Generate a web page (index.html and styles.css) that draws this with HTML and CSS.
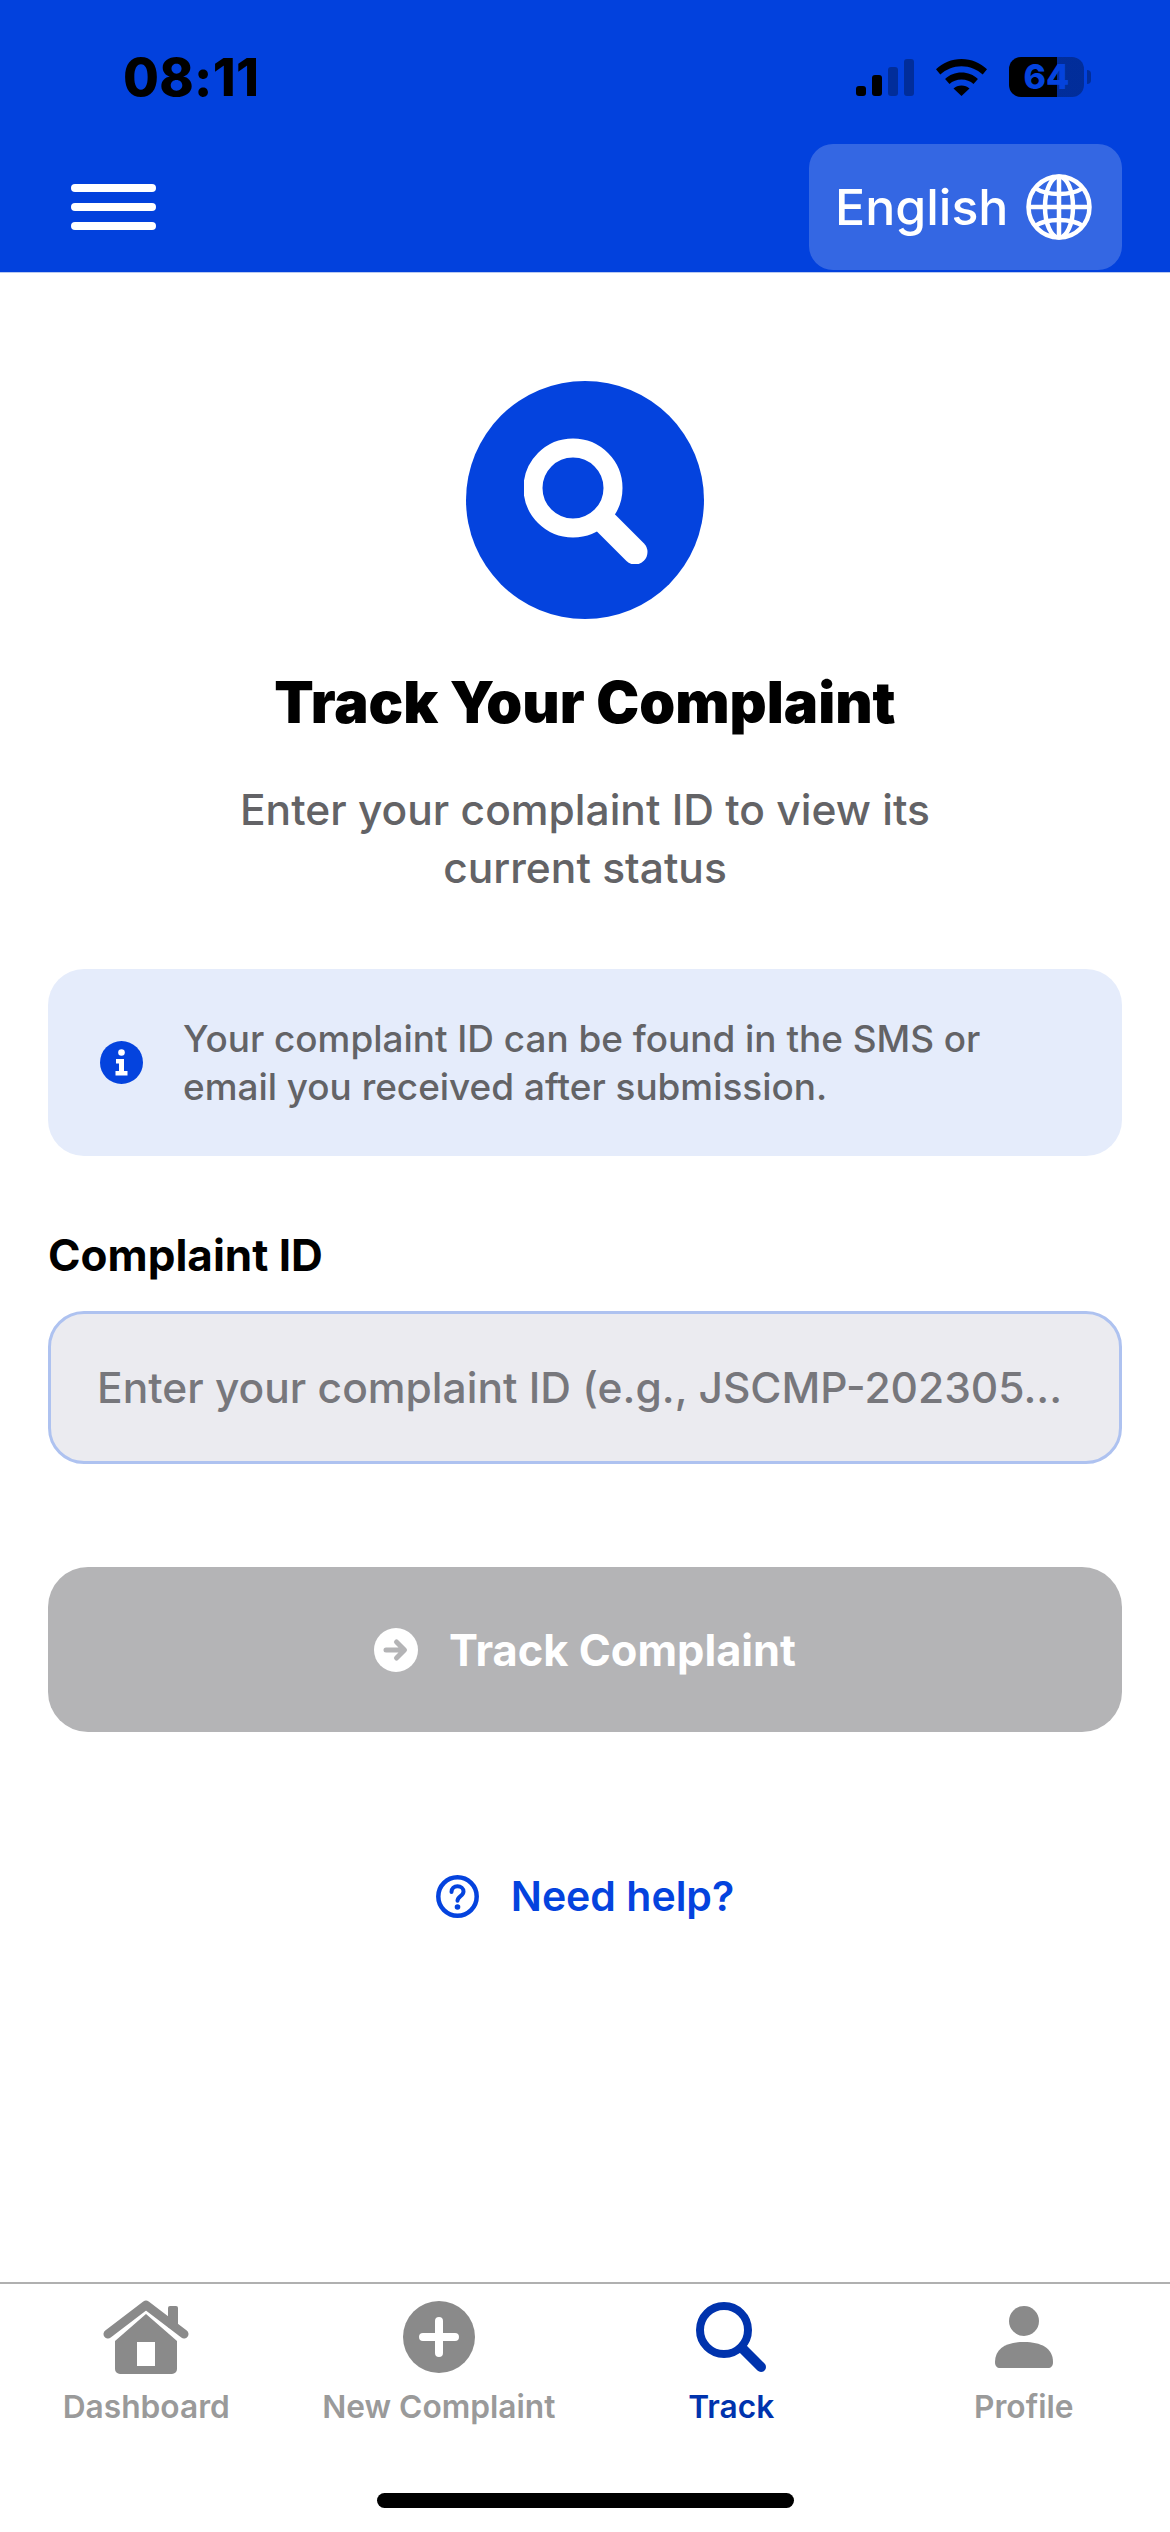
FILE: index.html
```html
<!DOCTYPE html>
<html lang="en">
<head>
    <meta charset="UTF-8">
    <meta name="viewport" content="width=device-width, initial-scale=1.0">
    <title>Track Your Complaint</title>
    <link rel="stylesheet" href="styles.css">
</head>
<body>

<header class="header">
    <div class="status-bar">
        <span class="time">08:11</span>
        <div class="status-icons">
            <svg class="signal" width="58" height="37" viewBox="0 0 58 37">
                <rect x="0" y="27" width="10" height="10" rx="3"/>
                <rect x="16" y="16" width="10" height="21" rx="3"/>
                <rect x="32" y="8" width="10" height="29" rx="3" opacity=".3"/>
                <rect x="48" y="0" width="10" height="37" rx="3" opacity=".3"/>
            </svg>
            <svg class="wifi" width="51" height="37" viewBox="0 0 51 37">
                <path d="M25.500 0C15.500 0 6.800 3.900 0 10.300l4.300 5.200C10 10.300 17.300 7.200 25.500 7.200s15.500 3.100 21.200 8.300l4.300-5.200C44.200 3.900 35.500 0 25.500 0z"/>
                <path d="M25.500 13.500c-6.300 0-12 2.400-16.400 6.400l4.400 5.200c3.100-2.800 7.300-4.500 12-4.500s8.900 1.700 12 4.500l4.400-5.200c-4.400-4-10.100-6.400-16.400-6.400z"/>
                <path d="M25.500 26.500c-3.100 0-5.900 1.100-8 3L25.500 37l8-7.500c-2.100-1.900-4.900-3-8-3z"/>
            </svg>
            <div class="battery">64</div>
        </div>
    </div>
    <div class="nav-row">
        <div class="menu-btn">
            <span></span>
            <span></span>
            <span></span>
        </div>
        <div class="lang-btn">
            <span>English</span>
            <svg width="66" height="66" viewBox="0 0 66 66" fill="none" stroke="#fff" stroke-width="4.500">
                <circle cx="33" cy="33" r="30.500"/>
                <ellipse cx="33" cy="33" rx="14" ry="30.500"/>
                <path d="M33 3v60M3 33h60"/>
                <path d="M9 14c6 4 14 6 24 6s18-2 24-6"/>
                <path d="M9 52c6-4 14-6 24-6s18 2 24 6"/>
            </svg>
        </div>
    </div>
</header>

<main class="content">
    <div class="hero-icon">
        <svg width="124" height="126" viewBox="0 0 124 126" fill="none" stroke="#fff">
            <circle cx="49" cy="50" r="40" stroke-width="19"/>
            <path d="M81 84l30 30" stroke-width="25" stroke-linecap="round"/>
        </svg>
    </div>
    <h1 class="title">Track Your Complaint</h1>
    <p class="subtitle">Enter your complaint ID to view its<br>current status</p>

    <div class="info-box">
        <svg class="info-icon" width="43" height="43" viewBox="0 0 43 43">
            <circle cx="21.500" cy="21.500" r="21.500" fill="#0443de"/>
            <circle cx="21.500" cy="11.500" r="3.300" fill="#fff"/>
            <path d="M16 18h8v12h3.500v4.500h-12V30H19v-7.500h-3z" fill="#fff"/>
        </svg>
        <p class="info-text">Your complaint ID can be found in the SMS or<br>email you received after submission.</p>
    </div>

    <label class="field-label">Complaint ID</label>
    <div class="field-input">Enter your complaint ID (e.g., JSCMP-202305...</div>

    <div class="track-btn">
        <svg width="44" height="44" viewBox="0 0 44 44">
            <circle cx="22" cy="22" r="22" fill="#fff"/>
            <path d="M12 22h18M22.500 14l8 8-8 8" fill="none" stroke="#b4b4b6" stroke-width="5" stroke-linecap="round" stroke-linejoin="round"/>
        </svg>
        <span>Track Complaint</span>
    </div>

    <div class="help-link">
        <svg width="43" height="43" viewBox="0 0 43 43" fill="none" stroke="#0443de">
            <circle cx="21.500" cy="21.500" r="19.200" stroke-width="4.500"/>
            <path d="M15.500 17c0-3.500 2.700-5.800 6-5.800s6 2.200 6 5.300c0 4.600-6 4.500-6 9.300" stroke-width="4" stroke-linecap="round"/>
            <circle cx="21.500" cy="32" r="2.800" fill="#0443de" stroke="none"/>
        </svg>
        <span>Need help?</span>
    </div>
</main>

<nav class="tab-bar">
    <div class="tab">
        <div class="tab-icon">
            <svg width="86" height="74" viewBox="0 0 86 74">
                <path d="M43 14L74 41v28a5 5 0 0 1-5 5H17a5 5 0 0 1-5-5V41zM34 42v24h18V42z" fill="#8a8a8a" fill-rule="evenodd"/>
                <path d="M5 34L43 5l38 29" fill="none" stroke="#8a8a8a" stroke-width="9" stroke-linecap="round" stroke-linejoin="round"/>
                <rect x="65" y="6" width="10" height="22" rx="2" fill="#8a8a8a"/>
            </svg>
        </div>
        <span>Dashboard</span>
    </div>
    <div class="tab">
        <div class="tab-icon">
            <svg width="72" height="72" viewBox="0 0 72 72">
                <circle cx="36" cy="36" r="36" fill="#8a8a8a"/>
                <path d="M36 20v32M20 36h32" stroke="#fff" stroke-width="8" stroke-linecap="round"/>
            </svg>
        </div>
        <span>New Complaint</span>
    </div>
    <div class="tab tab-active">
        <div class="tab-icon">
            <svg width="70" height="70" viewBox="0 0 70 70" fill="none" stroke="#0033ad">
                <circle cx="28" cy="28" r="24" stroke-width="8"/>
                <path d="M46 46l19 19" stroke-width="10" stroke-linecap="round"/>
            </svg>
        </div>
        <span>Track</span>
    </div>
    <div class="tab">
        <div class="tab-icon">
            <svg width="58" height="62" viewBox="0 0 58 62" fill="#8a8a8a">
                <circle cx="29" cy="15" r="15"/>
                <path d="M0 56C0 42 12 36 29 36s29 6 29 20c0 4-2 6-5 6H5c-3 0-5-2-5-6z"/>
            </svg>
        </div>
        <span>Profile</span>
    </div>
</nav>
<div class="home-area">
    <div class="home-indicator"></div>
</div>

</body>
</html>
```

FILE: styles.css
```css
* {
    box-sizing: border-box;
}

body {
    margin: 0;
    width: 1170px;
    height: 2532px;
    display: flex;
    flex-direction: column;
    background: #fff;
    font-family: Inter, "Noto Sans", sans-serif;
    color: #000;
}

.header {
    height: 273px;
    background: #0241dd;
    border-bottom: 1px solid #b9c9f0;
}

.status-bar {
    height: 144px;
    padding: 57px 86px 0 123px;
    display: flex;
    justify-content: space-between;
    align-items: flex-start;
}

.time {
    font-size: 52px;
    font-weight: 800;
    line-height: 42px;
    letter-spacing: 0.3px;
}

.status-icons {
    display: flex;
    align-items: center;
    gap: 22px;
    height: 40px;
}

.battery {
    position: relative;
    width: 75px;
    height: 40px;
    border-radius: 12px;
    background: linear-gradient(to right, #000 64%, rgba(0, 0, 0, 0.3) 64%);
    color: #0443de;
    font-size: 34px;
    font-weight: 800;
    line-height: 40px;
    text-align: center;
}

.battery::after {
    content: "";
    position: absolute;
    left: 78px;
    top: 13px;
    width: 4px;
    height: 14px;
    border-radius: 0 4px 4px 0;
    background: rgba(0, 0, 0, 0.3);
}

.nav-row {
    display: flex;
    justify-content: space-between;
    align-items: center;
    padding: 0 48px 0 71px;
}

.menu-btn {
    display: flex;
    flex-direction: column;
    gap: 11px;
}

.menu-btn span {
    display: block;
    width: 85px;
    height: 8px;
    border-radius: 4px;
    background: #fff;
}

.lang-btn {
    width: 313px;
    height: 126px;
    padding: 0 30px 0 26px;
    display: flex;
    align-items: center;
    justify-content: space-between;
    border-radius: 24px;
    background: rgba(255, 255, 255, 0.2);
    color: #fff;
    font-size: 50px;
    font-weight: 500;
}

.content {
    flex: 1;
    padding: 108px 48px 0;
    display: flex;
    flex-direction: column;
}

.hero-icon {
    width: 238px;
    height: 238px;
    margin: 0 auto;
    padding: 57px 0 0 58px;
    border-radius: 50%;
    background: #0443de;
}

.hero-icon svg {
    display: block;
}

.title {
    margin: 50px 0 0;
    font-size: 57.6px;
    font-weight: 900;
    line-height: 66px;
    text-align: center;
}

.subtitle {
    margin: 46px 0 0;
    color: #636366;
    font-size: 42.5px;
    font-weight: 500;
    line-height: 58px;
    text-align: center;
}

.info-box {
    margin-top: 72px;
    height: 187px;
    padding: 0 52px;
    display: flex;
    align-items: center;
    gap: 40px;
    border-radius: 36px;
    background: #e5ecfb;
}

.info-icon {
    flex-shrink: 0;
}

.info-text {
    margin: 0;
    color: #636366;
    font-size: 36.9px;
    font-weight: 500;
    line-height: 48px;
}

.field-label {
    display: block;
    margin-top: 74px;
    font-size: 44px;
    font-weight: 700;
    line-height: 50px;
}

.field-input {
    margin-top: 31px;
    height: 153px;
    padding: 0 46px;
    display: flex;
    align-items: center;
    border: 3px solid #aec2f0;
    border-radius: 36px;
    background: #ebebf0;
    color: #77777c;
    font-size: 42.5px;
    font-weight: 500;
    white-space: nowrap;
}

.track-btn {
    margin-top: 103px;
    height: 165px;
    display: flex;
    align-items: center;
    justify-content: center;
    gap: 31px;
    border-radius: 40px;
    background: #b4b4b6;
    color: #fff;
    font-size: 43.4px;
    font-weight: 700;
}

.help-link {
    margin-top: 139px;
    display: flex;
    align-items: center;
    justify-content: center;
    gap: 32px;
    color: #0443de;
    font-size: 41px;
    font-weight: 600;
}

.tab-bar {
    height: 155px;
    padding-top: 15px;
    display: grid;
    grid-template-columns: repeat(4, 1fr);
    border-top: 2px solid #b0b0b0;
}

.tab {
    display: flex;
    flex-direction: column;
    align-items: center;
    color: #9a9a9a;
    font-size: 31.7px;
    font-weight: 600;
    line-height: 40px;
}

.tab-icon {
    height: 76px;
    margin-bottom: 12px;
    display: flex;
    align-items: center;
    justify-content: center;
}

.tab-active {
    color: #0033ad;
}

.home-area {
    height: 95px;
    padding-top: 56px;
}

.home-indicator {
    width: 417px;
    height: 15px;
    margin: 0 auto;
    border-radius: 8px;
    background: #000;
}
```
